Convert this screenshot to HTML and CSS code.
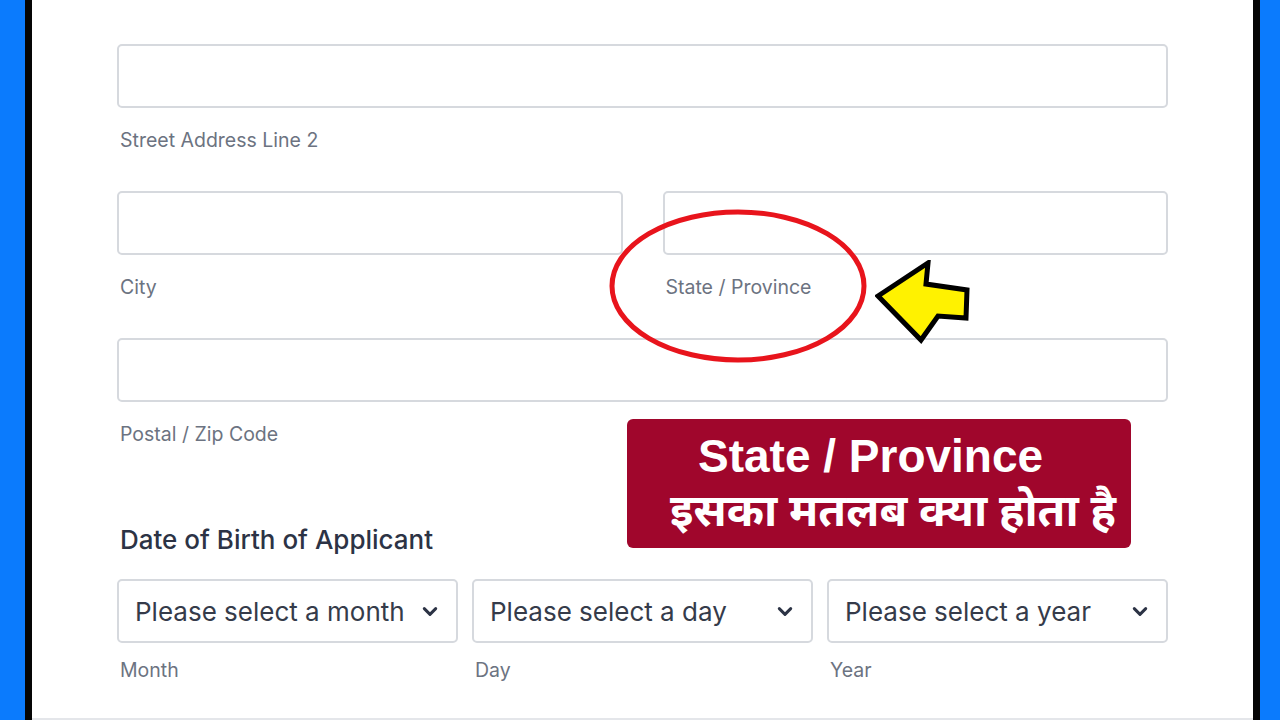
FILE: index.html
```html
<!DOCTYPE html>
<html>
<head>
<meta charset="utf-8">
<link rel="stylesheet" href="styles.css">
</head>
<body>
<div class="frame">
  <div class="side side-left"></div>
  <main class="sheet">
    <form class="form">
      <div class="field">
        <div class="input"></div>
        <div class="label">Street Address Line 2</div>
      </div>
      <div class="row two">
        <div class="field">
          <div class="input"></div>
          <div class="label">City</div>
        </div>
        <div class="field">
          <div class="input"></div>
          <div class="label">State / Province</div>
        </div>
      </div>
      <div class="field">
        <div class="input"></div>
        <div class="label">Postal / Zip Code</div>
      </div>
      <h2 class="heading">Date of Birth of Applicant</h2>
      <div class="row three">
        <div class="sfield">
          <div class="select"><span>Please select a month</span><svg class="chev" viewBox="0 0 14 9"><path d="M2 2 L7 7 L12 2"/></svg></div>
          <div class="label slabel">Month</div>
        </div>
        <div class="sfield">
          <div class="select"><span>Please select a day</span><svg class="chev" viewBox="0 0 14 9"><path d="M2 2 L7 7 L12 2"/></svg></div>
          <div class="label slabel">Day</div>
        </div>
        <div class="sfield">
          <div class="select"><span>Please select a year</span><svg class="chev" viewBox="0 0 14 9"><path d="M2 2 L7 7 L12 2"/></svg></div>
          <div class="label slabel">Year</div>
        </div>
      </div>
    </form>
    <svg class="ring" viewBox="0 0 264 160"><ellipse cx="132" cy="80" rx="126" ry="74"/></svg>
    <svg class="arrow" viewBox="0 0 100 84"><polygon points="3,36 53,3 51,24 92,30 91,58 63,56 46,80"/></svg>
    <div class="banner">
      <div class="b1">State / Province</div>
      <div class="b2">इसका मतलब क्या होता है</div>
    </div>
  </main>
  <div class="side side-right"></div>
</div>
</body>
</html>
```

FILE: styles.css
```css
html, body {
  margin: 0;
  padding: 0;
  background: #ffffff;
}
.frame {
  display: flex;
  width: 1280px;
  height: 720px;
  overflow: hidden;
}
.side-left {
  width: 25px;
  background: #0b7bfd;
  border-right: 7px solid #050505;
}
.side-right {
  width: 20px;
  background: #0b7bfd;
  border-left: 7px solid #050505;
}
.sheet {
  position: relative;
  flex: 1;
  background: #ffffff;
  border-bottom: 2px solid #e4e6ea;
  box-sizing: border-box;
  height: 720px;
}
.form {
  padding: 44px 85px 0;
  font-family: Inter, "Noto Sans", sans-serif;
}
.label {
  font-size: 19.5px;
  line-height: 24px;
  color: #6c7381;
  padding-left: 3px;
  margin-top: 20px;
}
.field {
  margin-bottom: 39px;
}
.input {
  height: 64px;
  box-sizing: border-box;
  border: 2px solid #d6d9de;
  border-radius: 5px;
}
.row {
  display: flex;
}
.row.two {
  gap: 40px;
}
.row.two .field {
  flex: 1;
}
.heading {
  margin: 79px 0 0;
  font-size: 26px;
  line-height: 30px;
  font-weight: 500;
  color: #2c3345;
  padding-left: 3px;
}
.row.three {
  gap: 14px;
  margin-top: 24px;
}
.sfield {
  flex: 1;
}
.select {
  height: 64px;
  box-sizing: border-box;
  border: 2px solid #d6d9de;
  border-radius: 5px;
  display: flex;
  align-items: center;
  justify-content: space-between;
  padding: 0 18px 0 16px;
  font-size: 26px;
  color: #353b4a;
}
.chev {
  width: 16px;
  height: 11px;
  fill: none;
  stroke: #2c3345;
  stroke-width: 2.6;
  stroke-linecap: round;
  stroke-linejoin: round;
}
.slabel {
  margin-top: 15px;
}
.ring {
  position: absolute;
  left: 574px;
  top: 206px;
  width: 264px;
  height: 160px;
  fill: none;
  stroke: #e8141c;
  stroke-width: 5;
}
.arrow {
  position: absolute;
  left: 843px;
  top: 260px;
  width: 100px;
  height: 84px;
  fill: #fff200;
  stroke: #000000;
  stroke-width: 5;
  stroke-linejoin: miter;
}
.banner {
  position: absolute;
  left: 595px;
  top: 419px;
  width: 504px;
  height: 129px;
  box-sizing: border-box;
  background: #a0062c;
  border-radius: 6px;
  color: #ffffff;
  font-family: "Liberation Sans", Arial, "Noto Sans Devanagari", "Noto Sans", sans-serif;
  font-weight: 700;
}
.b1 {
  font-size: 46px;
  line-height: 52px;
  padding: 11px 0 0 71px;
}
.b2 {
  font-size: 45px;
  line-height: 58px;
  padding: 4px 0 0 43px;
  font-family: "Noto Sans Devanagari", "Lohit Devanagari", "Noto Sans", "Liberation Sans", sans-serif;
}
```
